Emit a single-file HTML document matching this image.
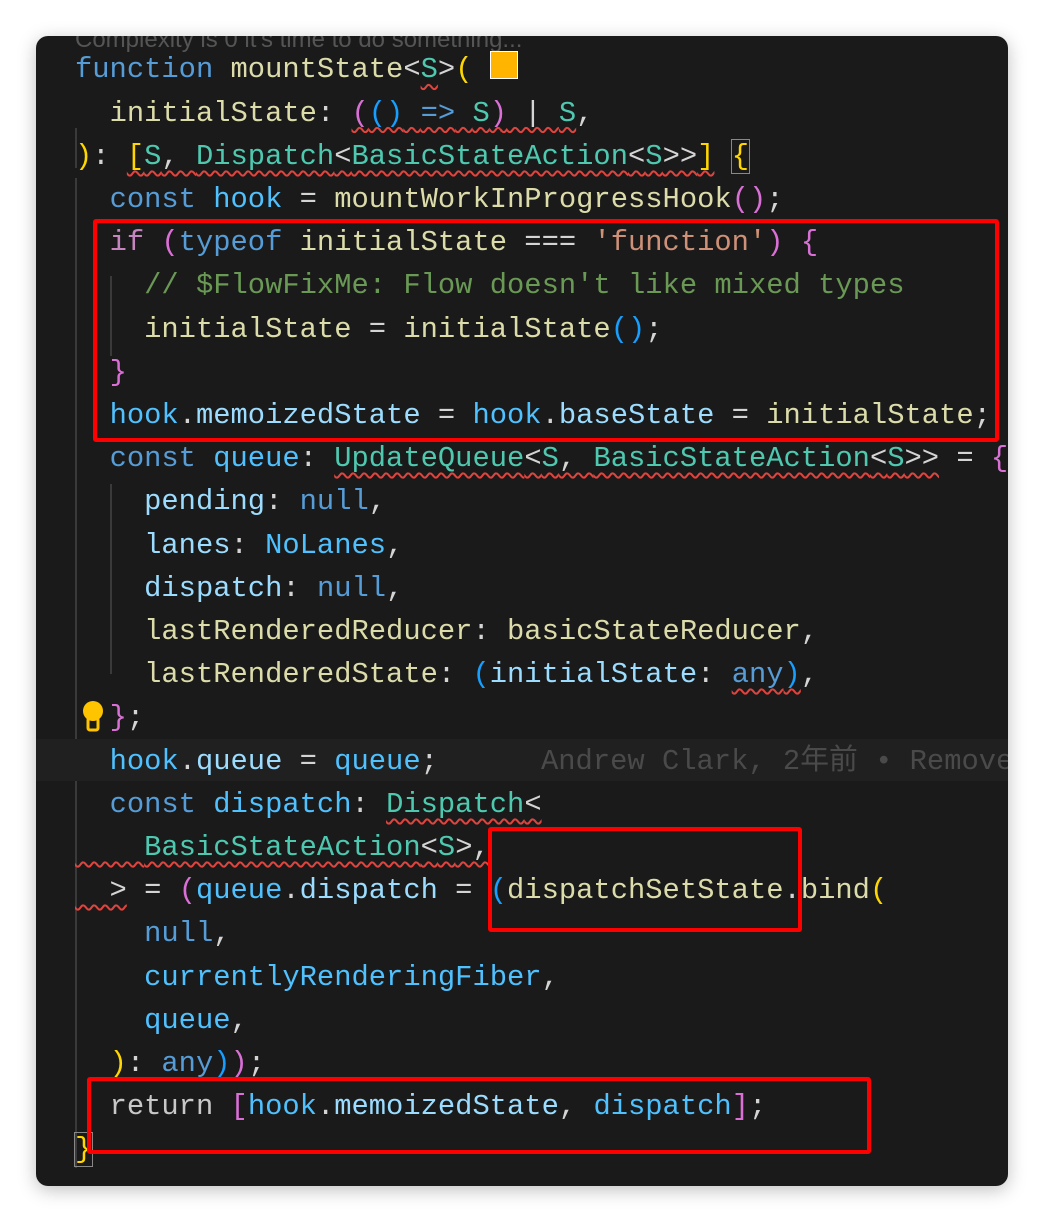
<!DOCTYPE html>
<html><head><meta charset="utf-8"><style>
body{margin:0;background:#fff;width:1044px;height:1222px;overflow:hidden;position:relative}
.panel{position:absolute;left:36px;top:36px;width:972px;height:1150px;background:#1a1a1a;border-radius:12px;overflow:hidden;box-shadow:0 4px 18px rgba(0,0,0,.25)}
.l{position:absolute;left:39px;height:43.2px;line-height:43.2px;font-family:"Liberation Mono","Noto Sans CJK SC",monospace;font-size:28.8px;white-space:pre;color:#d4d4d4}
.k{color:#569cd6}.f{color:#dcdcaa}.t{color:#4ec9b0}.v{color:#9cdcfe}.h{color:#4fc1ff}.c{color:#6a9955}.s{color:#ce9178}
.y{color:#ffd700}.m{color:#da70d6}.b{color:#179fff}.ctl{color:#c586c0}.g{color:#c8c8c8}
.sq{text-decoration:underline wavy #e0443e;text-decoration-thickness:1.5px;text-underline-offset:6px}
.box{position:absolute;border:4px solid #f00;border-radius:3px}
.guide{position:absolute;width:2px;background:#3a3a3a}
</style></head><body>
<div class="panel">
<div class="l" style="top:-18px;color:#555;font-family:'Liberation Sans',sans-serif;font-size:24px">Complexity is 0 it's time to do something...</div>
<div class="guide" style="left:39px;top:92px;height:40px"></div>
<div class="guide" style="left:39px;top:142px;height:990px"></div>
<div class="guide" style="left:74px;top:240px;height:80px"></div>
<div class="guide" style="left:74px;top:448px;height:190px"></div>
<div style="position:absolute;left:0;top:703px;width:972px;height:42px;background:#202020"></div>
<div class="l" style="top:12.4px"><span class="k">function</span> <span class="f">mountState</span>&lt;<span class="t sq">S</span>&gt;<span class="y">(</span> <span style="display:inline-block;width:26px;height:26px;background:#ffb400;border:1.5px solid #fff;vertical-align:-2px"></span></div>
<div class="l" style="top:55.6px">  <span class="f">initialState</span>: <span class="sq"><span class="m">(</span><span class="b">()</span> <span class="k">=&gt;</span> <span class="t">S</span><span class="m">)</span> | <span class="t">S</span></span>,</div>
<div class="l" style="top:98.8px"><span class="y">)</span>: <span class="sq"><span class="y">[</span><span class="t">S</span>, <span class="t">Dispatch</span>&lt;<span class="t">BasicStateAction</span>&lt;<span class="t">S</span>&gt;&gt;<span class="y">]</span></span> <span class="y" style="outline:1.5px solid #888">{</span></div>
<div class="l" style="top:142px">  <span class="k">const</span> <span class="h">hook</span> = <span class="f">mountWorkInProgressHook</span><span class="m">()</span>;</div>
<div class="l" style="top:185.2px">  <span class="ctl">if</span> <span class="m">(</span><span class="k">typeof</span> <span class="f">initialState</span> === <span class="s">'function'</span><span class="m">)</span> <span class="m">{</span></div>
<div class="l" style="top:228.4px">    <span class="c">// $FlowFixMe: Flow doesn't like mixed types</span></div>
<div class="l" style="top:271.6px">    <span class="f">initialState</span> = <span class="f">initialState</span><span class="b">()</span>;</div>
<div class="l" style="top:314.8px">  <span class="m">}</span></div>
<div class="l" style="top:358px">  <span class="h">hook</span>.<span class="v">memoizedState</span> = <span class="h">hook</span>.<span class="v">baseState</span> = <span class="f">initialState</span>;</div>
<div class="l" style="top:401.2px">  <span class="k">const</span> <span class="h">queue</span>: <span class="sq"><span class="t">UpdateQueue</span>&lt;<span class="t">S</span>, <span class="t">BasicStateAction</span>&lt;<span class="t">S</span>&gt;&gt;</span> = <span class="m">{</span></div>
<div class="l" style="top:444.4px">    <span class="v">pending</span>: <span class="k">null</span>,</div>
<div class="l" style="top:487.6px">    <span class="v">lanes</span>: <span class="h">NoLanes</span>,</div>
<div class="l" style="top:530.8px">    <span class="v">dispatch</span>: <span class="k">null</span>,</div>
<div class="l" style="top:574px">    <span class="f">lastRenderedReducer</span>: <span class="f">basicStateReducer</span>,</div>
<div class="l" style="top:617.2px">    <span class="f">lastRenderedState</span>: <span class="b">(</span><span class="v">initialState</span>: <span class="k sq">any</span><span class="b sq">)</span>,</div>
<div class="l" style="top:660.4px">  <span class="m">}</span>;</div>
<svg style="position:absolute;left:44px;top:664px" width="26" height="34" viewBox="0 0 26 34"><circle cx="13" cy="11" r="10" fill="#ffc400"/><rect x="8" y="18" width="10" height="12" rx="2" fill="none" stroke="#ffc400" stroke-width="3"/></svg>
<div class="l" style="top:703.6px">  <span class="h">hook</span>.<span class="v">queue</span> = <span class="h">queue</span>;</div>
<div class="l" style="top:703.6px;left:505px;color:#4a4a4a">Andrew Clark, 2年前 • Remove</div>
<div class="l" style="top:746.8px">  <span class="k">const</span> <span class="h">dispatch</span>: <span class="sq"><span class="t">Dispatch</span>&lt;</span></div>
<div class="l" style="top:790px"><span class="sq">    <span class="t">BasicStateAction</span>&lt;<span class="t">S</span>&gt;,</span></div>
<div class="l" style="top:833.2px"><span class="sq">  &gt;</span> = <span class="m">(</span><span class="h">queue</span>.<span class="v">dispatch</span> = <span class="b">(</span><span class="f">dispatchSetState</span>.<span class="f">bind</span><span class="y">(</span></div>
<div class="l" style="top:876.4px">    <span class="k">null</span>,</div>
<div class="l" style="top:919.6px">    <span class="h">currentlyRenderingFiber</span>,</div>
<div class="l" style="top:962.8px">    <span class="h">queue</span>,</div>
<div class="l" style="top:1006px">  <span class="y">)</span>: <span class="k">any</span><span class="b">)</span><span class="m">)</span>;</div>
<div class="l" style="top:1049.2px">  <span class="g">return</span> <span class="m">[</span><span class="h">hook</span>.<span class="v">memoizedState</span>, <span class="h">dispatch</span><span class="m">]</span>;</div>
<div class="l" style="top:1092.4px"><span class="y" style="outline:1.5px solid #888">}</span></div>
</div>
<div class="box" style="left:93px;top:219px;width:898px;height:215px"></div>
<div class="box" style="left:488px;top:827px;width:306px;height:97px"></div>
<div class="box" style="left:87px;top:1077px;width:776px;height:69px"></div>
</body></html>
